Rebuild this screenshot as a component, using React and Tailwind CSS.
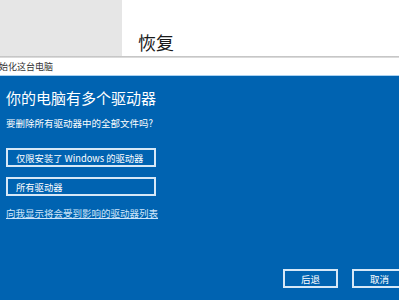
export default function App() {
  const cjk = { fontFamily: '"Noto Sans CJK SC", "Noto Sans", sans-serif' }

  return (
    <div className="w-[399px] h-[300px] overflow-hidden flex flex-col bg-white" style={cjk}>
      {/* Settings window behind */}
      <div className="h-[56px] flex shrink-0">
        <div className="w-[122px] bg-[#e6e6e6]" />
        <div className="flex-1 bg-white pl-[16px] pt-[31px]">
          <div className="text-[18px] leading-[22px] text-[#1a1a1a]">恢复</div>
        </div>
      </div>
      <div className="h-[2px] bg-gradient-to-b from-[#bdbdbd] to-[#e4e4e4] shrink-0" />

      {/* Dialog title bar */}
      <div className="h-[18px] bg-white flex items-center shrink-0 border-b border-[#a9d2f2]">
        <span className="text-[9px] leading-[12px] text-[#333] ml-[-1px]">始化这台电脑</span>
      </div>

      {/* Dialog body */}
      <div className="flex-1 bg-[#0063b1] flex flex-col pl-[6px] pt-[12px] pb-[12px] text-white">
        <h1 className="text-[15px] leading-[20px] font-normal">你的电脑有多个驱动器</h1>
        <p className="text-[9.5px] leading-[14px] mt-[8px]">要删除所有驱动器中的全部文件吗?</p>

        <button className="mt-[18px] w-[150px] h-[19px] border-2 border-[#d6e8f7] text-left pl-[8px] text-[9.3px] leading-[14px]">
          仅限安装了 Windows 的驱动器
        </button>
        <button className="mt-[10px] w-[150px] h-[19px] border-2 border-[#d6e8f7] text-left pl-[8px] text-[9.3px] leading-[14px]">
          所有驱动器
        </button>

        <a className="mt-[10px] text-[9.5px] leading-[14px] text-[#cfe6fb] underline w-fit">
          向我显示将会受到影响的驱动器列表
        </a>

        <div className="mt-auto flex gap-[14px] pl-[277px]">
          <button className="w-[55px] h-[19px] shrink-0 border-2 border-[#d6e8f7] text-[9.5px] leading-[14px]">后退</button>
          <button className="w-[55px] h-[19px] shrink-0 border-2 border-[#d6e8f7] text-[9.5px] leading-[14px]">取消</button>
        </div>
      </div>
    </div>
  )
}
